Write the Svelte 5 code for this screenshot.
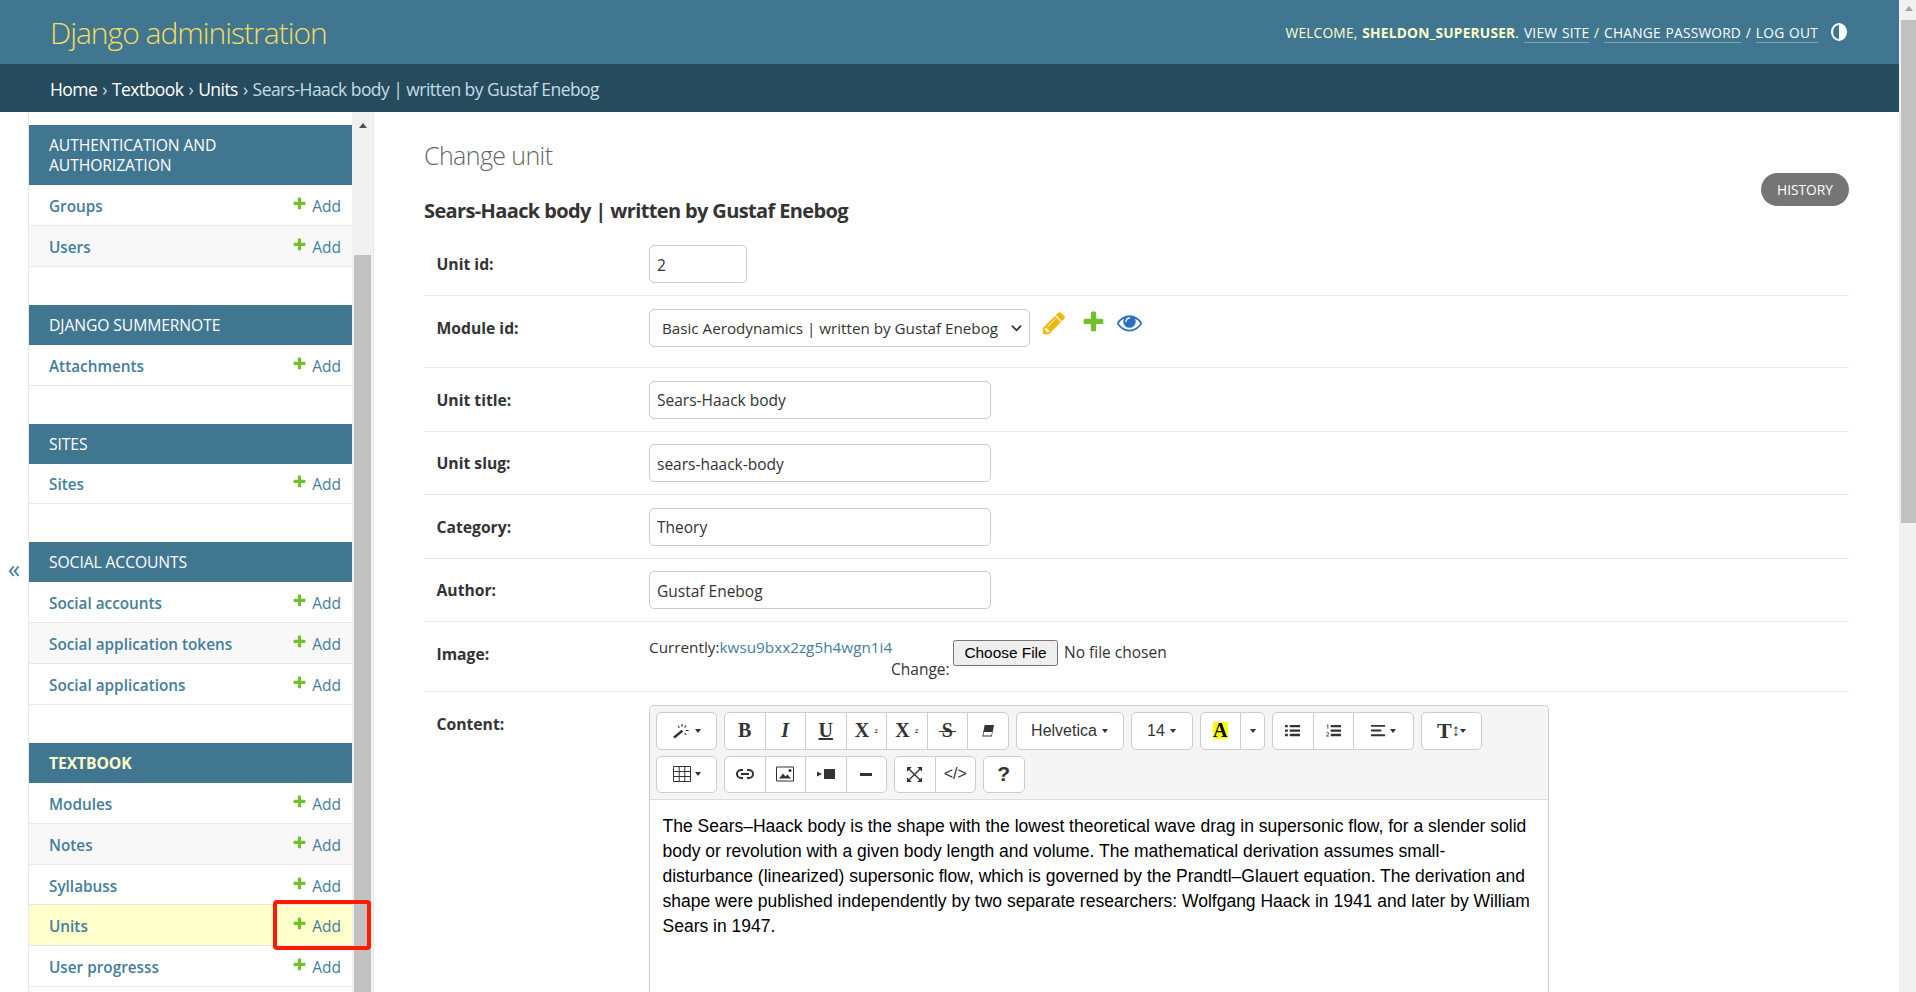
<script lang="ts">
	type Model = { name: string; current?: boolean };
	type Group = { title: string; current?: boolean; models: Model[] };

	const groups: Group[] = [
		{ title: 'Authentication and Authorization', models: [{ name: 'Groups' }, { name: 'Users' }] },
		{ title: 'Django Summernote', models: [{ name: 'Attachments' }] },
		{ title: 'Sites', models: [{ name: 'Sites' }] },
		{
			title: 'Social Accounts',
			models: [{ name: 'Social accounts' }, { name: 'Social application tokens' }, { name: 'Social applications' }]
		},
		{
			title: 'Textbook',
			current: true,
			models: [
				{ name: 'Modules' },
				{ name: 'Notes' },
				{ name: 'Syllabuss' },
				{ name: 'Units', current: true },
				{ name: 'User progresss' }
			]
		}
	];

	const plus =
		'M1600 796v192q0 40-28 68t-68 28h-416v416q0 40-28 68t-68 28h-192q-40 0-68-28t-28-68v-416h-416q-40 0-68-28t-28-68v-192q0-40 28-68t68-28h416v-416q0-40 28-68t68-28h192q40 0 68 28t28 68v416h416q40 0 68 28t28 68z';
	const pencil =
		'M491 1536l91-91-235-235-91 91v107h128v128h107zm523-928q0-22-22-22-10 0-17 7l-542 542q-7 7-7 17 0 22 22 22 10 0 17-7l542-542q7-7 7-17zm-54-192l416 416-832 832h-416v-416zm683 96q0 53-37 90l-166 166-416-416 166-165q36-38 90-38 53 0 91 38l235 234q37 39 37 91z';
	const eye =
		'M1664 960q-152-236-381-353 61 104 61 225 0 185-131.500 316.500t-316.500 131.500-316.500-131.500-131.500-316.500q0-121 61-225-229 117-381 353 133 205 333.500 326.500t434.500 121.500 434.500-121.500 333.500-326.500zm-720-384q0-20-14-34t-34-14q-125 0-214.500 89.500t-89.500 214.500q0 20 14 34t34 14 34-14 14-34q0-86 61-147t147-61q20 0 34-14t14-34zm848 384q0 34-20 69-140 230-376.500 368.500t-499.500 138.500-499.500-139-376.500-368q-20-35-20-69t20-69q140-229 376.500-368t499.500-139 499.500 139 376.500 368q20 35 20 69z';
</script>

<div class="page">
	<div class="shell">
		<header class="top">
			<div class="branding">Django administration</div>
			<div class="tools">
				<span>Welcome, <strong>sheldon_superuser</strong>. <a href="#top">View site</a> / <a href="#top">Change password</a> / <a href="#top">Log out</a></span>
				<svg class="theme" viewBox="0 0 16 20" aria-hidden="true">
					<ellipse cx="8" cy="10" rx="7" ry="8" fill="none" stroke="#fff" stroke-width="2" />
					<path d="M8 2a7 8 0 0 1 0 16z" fill="#fff" />
				</svg>
			</div>
		</header>
		<nav class="crumbs">
			<a href="#top">Home</a><span class="sep">›</span><a href="#top">Textbook</a><span class="sep">›</span><a href="#top">Units</a><span class="sep">›</span>Sears-Haack body | written by Gustaf Enebog
		</nav>

		<div class="main">
			<button class="toggle">«</button>
			<aside class="sidebar">
				<div class="nav-list">
					{#each groups as group (group.title)}
						<section class="module">
							<h3 class:on={group.current}>{group.title}</h3>
							{#each group.models as model (model.name)}
								<div class="row" class:hit={model.current}>
									<a class="model" href="#top">{model.name}</a>
									<a class="add" href="#top">
										<svg viewBox="0 0 1792 1792" aria-hidden="true"><path d={plus} fill="#70bf2b" /></svg>
										Add
									</a>
								</div>
							{/each}
						</section>
					{/each}
				</div>
				<div class="bar side-bar">
					<span class="arrow dark"></span>
					<span class="thumb"></span>
				</div>
				<div class="marker"></div>
			</aside>

			<main class="content">
				<div class="title-row">
					<h1>Change unit</h1>
					<a class="history" href="#top">History</a>
				</div>
				<h2>Sears-Haack body | written by Gustaf Enebog</h2>

				<div class="form">
					<div class="field">
						<label for="unit-id">Unit id:</label>
						<input id="unit-id" class="short" value="2" />
					</div>
					<div class="field module-field">
						<label for="module-id">Module id:</label>
						<select id="module-id">
							<option>Basic Aerodynamics | written by Gustaf Enebog</option>
						</select>
						<span class="related">
							<svg class="pen" viewBox="0 0 1792 1792" aria-hidden="true"><path d={pencil} fill="#efb80b" /></svg>
							<svg class="plus" viewBox="0 0 1792 1792" aria-hidden="true"><path d={plus} fill="#70bf2b" /></svg>
							<svg class="eye" viewBox="0 0 1792 1792" aria-hidden="true"><path d={eye} fill="#2b70bf" /></svg>
						</span>
					</div>
					<div class="field">
						<label for="unit-title">Unit title:</label>
						<input id="unit-title" value="Sears-Haack body" />
					</div>
					<div class="field">
						<label for="unit-slug">Unit slug:</label>
						<input id="unit-slug" value="sears-haack-body" />
					</div>
					<div class="field">
						<label for="category">Category:</label>
						<input id="category" value="Theory" />
					</div>
					<div class="field">
						<label for="author">Author:</label>
						<input id="author" value="Gustaf Enebog" />
					</div>
					<div class="field image-field">
						<label for="image">Image:</label>
						<span class="currently">Currently:<a href="#top">kwsu9bxx2zg5h4wgn1i4</a></span>
						<span class="change">Change:</span>
						<input id="image" type="file" />
					</div>
					<div class="field content-field">
						<label for="editor">Content:</label>
						<div class="editor" id="editor">
							<div class="toolbar">
								<div class="tool-row">
									<div class="grp">
										<button class="wide">
											<svg class="ic big" viewBox="0 0 20 18" aria-hidden="true">
												<path d="M0 15.500 9.500 7.500l2 2L2 17.500z" fill="#333" />
												<path d="M10 1v3.500M14.500 2.500 12.800 5M17.500 8.500h-3.500M15 13.500l-2-2.200M5.500 3l1.500 2.500" stroke="#333" stroke-width="1.200" fill="none" />
											</svg><i class="caret"></i>
										</button>
									</div>
									<div class="grp">
										<button class="g b">B</button>
										<button class="g it">I</button>
										<button class="g u">U</button>
										<button class="g b">X<sup>2</sup></button>
										<button class="g b">X<sub>2</sub></button>
										<button class="g st"><span>S</span></button>
										<button>
											<svg class="ic" viewBox="0 0 16 16" aria-hidden="true">
												<path d="M5 2h10l-2.500 12.500H2.500z" fill="#333" />
												<path d="M4.200 9.500h8.800l-1 3.800H3.600z" fill="#fff" />
											</svg>
										</button>
									</div>
									<div class="grp"><button class="helv">Helvetica<i class="caret"></i></button></div>
									<div class="grp"><button class="size">14<i class="caret"></i></button></div>
									<div class="grp">
										<button><span class="hl">A</span></button>
										<button class="narrow"><i class="caret"></i></button>
									</div>
									<div class="grp">
										<button>
											<svg class="ic" viewBox="0 0 16 14" aria-hidden="true">
												<path d="M0 1h3v2.500H0zM0 5.800h3v2.500H0zM0 10.500h3V13H0zM5 1h11v2.500H5zM5 5.800h11v2.500H5zM5 10.500h11V13H5z" fill="#333" />
											</svg>
										</button>
										<button>
											<svg class="ic" viewBox="0 0 16 14" aria-hidden="true">
												<path d="M5 1h11v2.500H5zM5 5.800h11v2.500H5zM5 10.500h11V13H5z" fill="#333" />
												<path d="M1 1.500 2 1v4M.5 9.500q1.500-1 2.200 0T.5 13H3" fill="none" stroke="#333" stroke-width=".9" />
											</svg>
										</button>
										<button class="wide">
											<svg class="ic" viewBox="0 0 16 14" aria-hidden="true">
												<path d="M0 1h15v2H0zM0 6h11v2H0zM0 11h15v2H0z" fill="#333" />
											</svg><i class="caret"></i>
										</button>
									</div>
									<div class="grp">
										<button class="wide"><span class="tt">T</span><span class="updown">↕</span><i class="caret"></i></button>
									</div>
								</div>
								<div class="tool-row">
									<div class="grp">
										<button class="wide">
											<svg class="ic big" viewBox="0 0 18 16" aria-hidden="true">
												<path d="M.5.500h17v15H.5zM.5 5.500h17M.5 10.500h17M6.200.500v15M11.800.500v15" fill="none" stroke="#333" />
											</svg><i class="caret"></i>
										</button>
									</div>
									<div class="grp">
										<button>
											<svg class="ic big" viewBox="0 0 18 12" aria-hidden="true">
												<path d="M7 2H5a4 4 0 0 0 0 8h2M11 2h2a4 4 0 0 1 0 8h-2M5 6h8" fill="none" stroke="#333" stroke-width="2" />
											</svg>
										</button>
										<button>
											<svg class="ic big" viewBox="0 0 18 15" aria-hidden="true">
												<path d="M.5.500h17v14H.5z" fill="none" stroke="#333" />
												<path d="M3 12l4-5 2.500 3 2-2 3.500 4z" fill="#333" />
												<circle cx="14" cy="4" r="1.500" fill="#333" />
											</svg>
										</button>
										<button>
											<svg class="ic big" viewBox="0 0 18 12" aria-hidden="true">
												<path d="M7 1h11v10H7zM0 3.500 5 6l-5 2.500z" fill="#333" />
											</svg>
										</button>
										<button><span class="dash"></span></button>
									</div>
									<div class="grp">
										<button>
											<svg class="ic" viewBox="0 0 14 14" aria-hidden="true">
												<path d="M2 2l10 10M12 2 2 12" stroke="#333" stroke-width="1.300" fill="none" />
												<path d="M0 0h4.500L0 4.500zM14 0v4.500L9.500 0zM0 14V9.500L4.500 14zM14 14H9.500L14 9.500z" fill="#333" />
											</svg>
										</button>
										<button class="code">&lt;/&gt;</button>
									</div>
									<div class="grp"><button class="help">?</button></div>
								</div>
							</div>
							<div class="editable">
								The Sears–Haack body is the shape with the lowest theoretical wave drag in supersonic flow, for a slender solid
								body or revolution with a given body length and volume. The mathematical derivation assumes small-disturbance
								(linearized) supersonic flow, which is governed by the Prandtl–Glauert equation. The derivation and shape were
								published independently by two separate researchers: Wolfgang Haack in 1941 and later by William Sears in 1947.
							</div>
						</div>
					</div>
				</div>
			</main>
		</div>
	</div>

	<div class="bar page-bar">
		<span class="arrow"></span>
		<span class="thumb"></span>
	</div>
</div>

<style>
	:global(body) {
		margin: 0;
		background: #fff;
		overflow: hidden;
	}
	.page {
		display: flex;
		height: 992px;
		overflow: hidden;
		font-family: 'Open Sans', sans-serif;
		font-size: 16.25px;
		color: #333;
	}
	.shell {
		flex: 1;
		min-width: 0;
		display: flex;
		flex-direction: column;
	}
	a {
		text-decoration: none;
		color: #447e9b;
	}
	.top {
		height: 64px;
		flex: none;
		background: #417690;
		display: flex;
		align-items: center;
		justify-content: space-between;
		padding: 0 52px 0 50px;
		box-sizing: border-box;
	}
	.branding {
		color: #f5dd5d;
		font-size: 30px;
		font-weight: 300;
		letter-spacing: -1px;
	}
	.tools {
		display: flex;
		align-items: center;
		color: #ffc;
		font-size: 13.75px;
		text-transform: uppercase;
		letter-spacing: 0.2px;
		word-spacing: 1px;
		white-space: nowrap;
	}
	.tools strong {
		font-weight: 700;
	}
	.tools a {
		color: #fff;
		border-bottom: 1px solid rgba(255, 255, 255, 0.35);
	}
	.theme {
		width: 16px;
		height: 20px;
		margin-left: 13px;
	}
	.crumbs {
		height: 48px;
		flex: none;
		box-sizing: border-box;
		background: #264b5d;
		color: #c4dce8;
		padding: 2px 50px 0;
		font-size: 17.5px;
		line-height: 46px;
		letter-spacing: -0.55px;
	}
	.crumbs a {
		color: #fff;
	}
	.sep {
		margin: 0 5px;
	}
	.main {
		flex: 1;
		min-height: 0;
		display: flex;
	}
	.toggle {
		width: 29px;
		flex: none;
		border: 0;
		border-right: 1px solid #e8e8e8;
		background: #fff;
		color: #447e9b;
		font-size: 25px;
		font-family: inherit;
		padding: 32px 0 0;
	}
	.sidebar {
		width: 345px;
		flex: none;
		display: flex;
		position: relative;
		border-right: 1px solid #e8e8e8;
		box-sizing: border-box;
		overflow: hidden;
	}
	.nav-list {
		width: 323px;
		flex: none;
		padding-top: 13px;
	}
	.module {
		margin-bottom: 38px;
	}
	.module h3 {
		margin: 0;
		padding: 10px 20px;
		background: #417690;
		color: #fff;
		font-size: 15.7px;
		line-height: 20px;
		font-weight: 400;
		text-transform: uppercase;
		letter-spacing: -0.1px;
	}
	.module h3.on {
		color: #ffc;
		font-weight: 700;
	}
	.row {
		display: flex;
		align-items: center;
		justify-content: space-between;
		height: 40.85px;
		box-sizing: border-box;
		padding: 2px 11px 0 20px;
		border-bottom: 1px solid #e8e8e8;
		font-size: 15.3px;
	}
	.row:nth-of-type(even) {
		background: #f8f8f8;
	}
	.row.hit {
		background: #ffc;
	}
	.model {
		font-weight: 600;
	}
	.add {
		display: flex;
		align-items: center;
		gap: 5px;
		font-size: 15.5px;
	}
	.add svg {
		width: 15px;
		height: 15px;
		margin-top: -5px;
	}
	.bar {
		flex: none;
		display: flex;
		flex-direction: column;
		background: #f1f1f1;
	}
	.side-bar {
		width: 21px;
	}
	.page-bar {
		width: 17px;
	}
	.arrow {
		flex: none;
		height: 17px;
		box-sizing: border-box;
		display: flex;
		align-items: center;
		justify-content: center;
	}
	.arrow::before {
		content: '';
		border: 4.500px solid transparent;
		border-top: 0;
		border-bottom: 5px solid #a3a3a3;
		margin-left: 2px;
	}
	.arrow.dark {
		height: 27px;
	}
	.arrow.dark::before {
		border-bottom-color: #505050;
		margin-left: 0;
	}
	.side-bar .thumb {
		margin: 116px 2px 0 2px;
		flex: 1;
		background: #c1c1c1;
	}
	.page-bar .thumb {
		margin: 3px 0 0 2px;
		height: 503px;
		background: #c1c1c1;
	}
	.marker {
		position: absolute;
		left: 244px;
		top: 788px;
		width: 98px;
		height: 50px;
		box-sizing: border-box;
		border: 4.500px solid #ff1a00;
		border-radius: 4px;
	}
	.content {
		flex: 1;
		min-width: 0;
		padding: 25px 50px 0 50px;
		overflow: hidden;
	}
	.title-row {
		display: flex;
		justify-content: space-between;
		align-items: flex-start;
		height: 60.5px;
	}
	h1 {
		margin: 0;
		font-size: 25px;
		line-height: 36px;
		font-weight: 300;
		color: #666;
		letter-spacing: -0.6px;
	}
	.history {
		margin-top: 36px;
		background: #757575;
		color: #fff;
		height: 33px;
		line-height: 33px;
		width: 88px;
		text-align: center;
		border-radius: 17px;
		font-size: 13.75px;
		text-transform: uppercase;
	}
	h2 {
		margin: 0;
		font-size: 20px;
		line-height: 25px;
		font-weight: 700;
		letter-spacing: -0.63px;
	}
	.form {
		margin-top: 10px;
	}
	.field {
		display: flex;
		align-items: flex-start;
		padding: 12.500px 0 12.500px 12.500px;
		border-bottom: 1px solid #e8e8e8;
		box-sizing: border-box;
		height: 63.5px;
	}
	.field label {
		width: 212.500px;
		flex: none;
		font-weight: 700;
		line-height: 38px;
		font-size: 15.7px;
	}
	input:not([type='file']),
	select {
		box-sizing: border-box;
		height: 38px;
		width: 342px;
		border: 1px solid #ccc;
		border-radius: 5px;
		padding: 1px 7px 0;
		font: inherit;
		font-size: 15.5px;
		color: #333;
		background: #fff;
	}
	input.short {
		width: 98px;
	}
	select {
		width: 381px;
		padding: 0 26px 0 12px;
		font-size: 15.2px;
		appearance: none;
		background: #fff url("data:image/svg+xml,%3Csvg xmlns='http://www.w3.org/2000/svg' viewBox='0 0 12 8'%3E%3Cpath d='M1 1.500l5 5 5-5' fill='none' stroke='%23333' stroke-width='2'/%3E%3C/svg%3E") no-repeat right 7px center / 11px 8px;
	}
	.module-field {
		height: 72px;
	}
	.related {
		display: flex;
		align-items: flex-start;
		margin-left: 11px;
	}
	.pen {
		width: 26px;
		height: 26px;
		margin-top: 1px;
	}
	.plus {
		width: 25px;
		height: 25px;
		margin-left: 13.500px;
	}
	.eye {
		width: 25px;
		height: 25px;
		margin: 1.500px 0 0 11.500px;
	}
	.image-field {
		height: 70px;
	}
	.image-field label {
		line-height: 39px;
	}
	.currently {
		width: 242px;
		flex: none;
		line-height: 25px;
		font-size: 15.3px;
	}
	.change {
		width: 62px;
		flex: none;
		line-height: 25px;
		margin-top: 22px;
		font-size: 15.5px;
	}
	input[type='file'] {
		margin-top: 5px;
		font-family: inherit;
		font-size: 15.5px;
		color: #333;
		width: 240px;
	}
	input[type='file']::file-selector-button {
		font-family: 'Liberation Sans', Arial, sans-serif;
		font-size: 15.4px;
		height: 26px;
		width: 105px;
		padding: 0;
		margin-right: 6px;
	}
	.content-field {
		border: 0;
		height: auto;
		padding-top: 13px;
	}
	.content-field label {
		line-height: 25px;
		margin-top: 7px;
	}
	.editor {
		width: 900px;
		box-sizing: border-box;
		border: 1px solid #ccc;
		border-bottom: 0;
		border-radius: 5px 5px 0 0;
		height: 400px;
	}
	.toolbar {
		background: #f5f5f5;
		border-bottom: 1px solid #ddd;
		padding: 6px;
		display: flex;
		flex-direction: column;
		gap: 6px;
		border-radius: 5px 5px 0 0;
	}
	.tool-row {
		display: flex;
		gap: 7px;
	}
	.grp {
		display: flex;
		border-radius: 5px;
	}
	.grp button {
		height: 37.500px;
		width: 41.500px;
		box-sizing: border-box;
		margin-left: -1px;
		padding: 0;
		border: 1px solid #ccc;
		background: #fff;
		color: #333;
		display: flex;
		align-items: center;
		justify-content: center;
		font-family: 'Liberation Sans', Arial, sans-serif;
		font-size: 17.500px;
		gap: 4px;
	}
	.grp button:first-child {
		margin-left: 0;
		border-radius: 5px 0 0 5px;
	}
	.grp button:last-child {
		border-radius: 0 5px 5px 0;
	}
	.grp button:only-child {
		border-radius: 5px;
	}
	.grp button.wide {
		width: 61px;
	}
	.grp button.helv {
		width: 108px;
		font-size: 16px;
		gap: 5px;
	}
	.grp button.size {
		width: 62px;
		font-size: 16px;
		gap: 5px;
	}
	.grp button.narrow {
		width: 25px;
	}
	.caret {
		width: 0;
		height: 0;
		border: 3.500px solid transparent;
		border-bottom: 0;
		border-top: 4.500px solid #333;
	}
	.ic {
		width: 15px;
		height: 15px;
	}
	.ic.big {
		width: 18px;
		height: 16px;
	}
	.g {
		font-family: 'Liberation Serif', serif !important;
		font-size: 20px !important;
		font-weight: 700;
	}
	.g.it {
		font-style: italic;
	}
	.g.u {
		text-decoration: underline;
	}
	.g.st span {
		position: relative;
	}
	.g.st span::after {
		content: '';
		position: absolute;
		left: -3px;
		right: -3px;
		top: 50%;
		height: 1.500px;
		background: #333;
	}
	.g sup,
	.g sub {
		font-size: 7px;
		line-height: 0;
		margin-left: 1px;
	}
	.hl {
		background: #ff0;
		color: #000;
		font-family: 'Liberation Serif', serif;
		font-weight: 700;
		font-size: 20px;
		line-height: 17px;
		width: 15px;
		text-align: center;
	}
	.tt {
		font-family: 'Liberation Serif', serif;
		font-weight: 700;
		font-size: 22px;
		margin-right: -4px;
	}
	.updown {
		font-size: 17px;
		margin-right: -4px;
	}
	.dash {
		width: 12px;
		height: 2.500px;
		background: #333;
	}
	.code {
		font-size: 16px !important;
	}
	.help {
		font-weight: 700;
		font-size: 21px !important;
	}
	.editable {
		padding: 14px 12.500px;
		font-family: 'Liberation Sans', Arial, sans-serif;
		font-size: 17.500px;
		line-height: 25px;
		color: #000;
	}
</style>
